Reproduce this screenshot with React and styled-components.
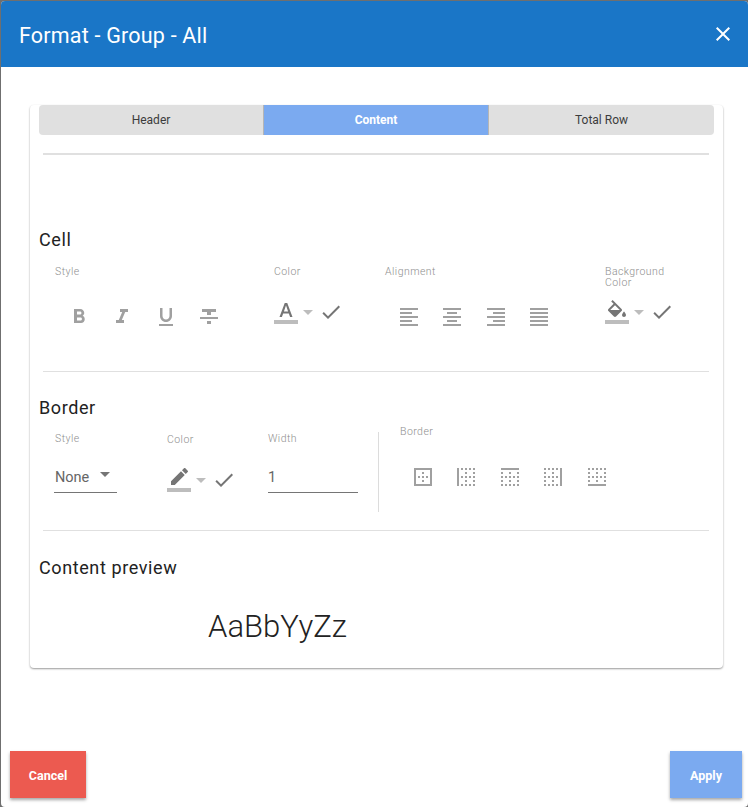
import React from "react";
import styled, { createGlobalStyle } from "styled-components";

const GlobalStyle = createGlobalStyle`
  html, body {
    margin: 0;
    padding: 0;
    height: 100%;
    background: #6f6f6f;
    overflow: hidden;
  }
  * {
    box-sizing: border-box;
  }
`;

const Dialog = styled.div`
  margin: 1px 0 0 1px;
  height: 806px;
  display: flex;
  flex-direction: column;
  background: #fff;
  border-radius: 4px;
  overflow: hidden;
  font-family: Roboto, "Liberation Sans", sans-serif;
`;

const Header = styled.div`
  height: 66px;
  flex-shrink: 0;
  display: flex;
  align-items: center;
  justify-content: space-between;
  padding: 0 13px 0 18px;
  background: #1a76c7;
  color: #fff;
`;

const Title = styled.div`
  padding-top: 2px;
  font-size: 21.5px;
  letter-spacing: 0.2px;
`;

const CloseIcon = styled.svg`
  width: 24px;
  height: 24px;
  fill: #fff;
`;

const Card = styled.div`
  margin: 38px 25px 0 29px;
  padding: 0 9px 21px;
  background: #fff;
  border-radius: 4px;
  box-shadow: 0 1px 2px rgba(0, 0, 0, 0.4);
`;

const Tabs = styled.div`
  display: grid;
  grid-template-columns: 224px 226px 225px;
  height: 30px;
  border-radius: 4px;
  overflow: hidden;
`;

const Tab = styled.div`
  display: flex;
  align-items: center;
  justify-content: center;
  font-size: 12px;
  background: ${(p) => (p.$active ? "#7baaf0" : "#e0e0e0")};
  color: ${(p) => (p.$active ? "#fff" : "#3c3c3c")};
  font-weight: ${(p) => (p.$active ? 700 : 400)};
  border-left: ${(p) => (p.$active ? "1px solid #b5b5b5" : "none")};
  border-right: ${(p) => (p.$active ? "1px solid #b5b5b5" : "none")};
`;

const Divider = styled.div`
  height: ${(p) => p.$h || 1}px;
  margin: ${(p) => p.$mt}px 5px 0 4px;
  background: #e0e0e0;
`;

const SectionTitle = styled.div`
  height: 24px;
  margin-top: ${(p) => p.$mt}px;
  padding-top: 1px;
  font-size: 18px;
  line-height: 24px;
  letter-spacing: 0.6px;
  color: #222;
`;

const CellRow = styled.div`
  display: grid;
  grid-template-columns: 219px 111px 220px auto;
  margin-top: 15px;
  padding-left: 16px;
`;

const BorderRow = styled.div`
  display: grid;
  grid-template-columns: 112px 101px 110px 1px auto;
  margin-top: 7px;
  padding-left: 16px;
`;

const Col = styled.div`
  padding-top: ${(p) => p.$top || 0}px;
`;

const Label = styled.div`
  height: ${(p) => p.$h}px;
  font-size: 10.5px;
  font-weight: 300;
  line-height: 11px;
  color: #8e8e8e;
  letter-spacing: 0.45px;
`;

const IconRow = styled.div`
  display: flex;
  padding-top: ${(p) => p.$top || 0}px;
  padding-left: ${(p) => p.$left || 0}px;
`;

const IconCell = styled.div`
  width: 43.5px;
  display: flex;
  justify-content: center;
`;

const Icon = styled.svg`
  width: 24px;
  height: 24px;
  flex-shrink: 0;
  fill: ${(p) => p.$color || "#a0a0a0"};
`;

const Picker = styled.div`
  display: flex;
  align-items: center;
  height: 24px;
`;

const Caret = styled.span`
  flex-shrink: 0;
  display: block;
  width: 0;
  height: 0;
  margin: ${(p) => (p.$dark ? "0" : "0 6px 0 5px")};
  border-left: 5px solid transparent;
  border-right: 5px solid transparent;
  border-top: 5px solid ${(p) => (p.$dark ? "#757575" : "#bdbdbd")};
`;

const Select = styled.div`
  width: 63px;
  height: 25px;
  margin-left: -1px;
  padding: 1px 0 0 1px;
  display: flex;
  gap: 11px;
  border-bottom: 1px solid #757575;
  font-size: 14.5px;
  line-height: 18px;
  color: #666;
`;

const SelectCaret = styled.div`
  padding-top: 3px;
`;

const WidthInput = styled.input`
  display: block;
  width: 90px;
  height: 25px;
  padding: 0 0 6px;
  border: none;
  border-bottom: 1px solid #757575;
  outline: none;
  background: transparent;
  font-family: inherit;
  font-size: 14.5px;
  color: #666;
`;

const VerticalLine = styled.div`
  width: 1px;
  height: 80px;
  margin-top: 6px;
  background: #dcdcdc;
`;

const BorderCol = styled.div`
  padding-left: 21px;
`;

const Preview = styled.div`
  margin: 28px 0 0 169px;
  font-size: 31px;
  font-weight: 300;
  line-height: 40px;
  color: #222;
`;

const Footer = styled.div`
  margin-top: auto;
  display: flex;
  justify-content: space-between;
  padding: 0 6px 9px 9px;
`;

const Button = styled.button`
  width: ${(p) => p.$w}px;
  height: 47px;
  padding: 2px 0 0;
  border: none;
  background: ${(p) => p.$bg};
  color: #fff;
  font-family: inherit;
  font-size: 12.5px;
  font-weight: 700;
  box-shadow: 0 2px 3px rgba(0, 0, 0, 0.35);
`;

const PATHS = {
  bold: "M15.6 10.79c.97-.67 1.65-1.77 1.65-2.79 0-2.26-1.75-4-4-4H7v14h7.04c2.09 0 3.71-1.7 3.71-3.79 0-1.52-.86-2.82-2.15-3.42zM10 6.5h3c.83 0 1.5.67 1.5 1.5s-.67 1.5-1.5 1.5h-3v-3zm3.5 9H10v-3h3.5c.83 0 1.5.67 1.5 1.5s-.67 1.5-1.5 1.5z",
  italic: "M10 4v3h2.21l-3.42 8H6v3h8v-3h-2.21l3.42-8H18V4z",
  underline: "M12 17c3.31 0 6-2.69 6-6V3h-2.5v8c0 1.93-1.57 3.5-3.5 3.5S8.5 12.93 8.5 11V3H6v8c0 3.31 2.69 6 6 6zm-7 2v2h14v-2H5z",
  strike: "M10 19h4v-3h-4v3zM5 4v3h5v3h4V7h5V4H5zM3 14h18v-2H3v2z",
  left: "M15 15H3v2h12v-2zm0-8H3v2h12V7zM3 13h18v-2H3v2zm0 8h18v-2H3v2zM3 3v2h18V3H3z",
  center: "M7 15v2h10v-2H7zm-4 6h18v-2H3v2zm0-8h18v-2H3v2zm4-6v2h10V7H7zM3 3v2h18V3H3z",
  right: "M3 21h18v-2H3v2zm6-4h12v-2H9v2zm-6-4h18v-2H3v2zm6-4h12V7H9v2zM3 3v2h18V3H3z",
  justify: "M3 21h18v-2H3v2zm0-4h18v-2H3v2zm0-4h18v-2H3v2zm0-4h18V7H3v2zm0-6v2h18V3H3z",
  borderOuter: "M13 7h-2v2h2V7zm0 4h-2v2h2v-2zm4 0h-2v2h2v-2zM3 3v18h18V3H3zm16 16H5V5h14v14zm-6-4h-2v2h2v-2zm-4-4H7v2h2v-2z",
  borderLeft: "M11 21h2v-2h-2v2zm0-4h2v-2h-2v2zm0-12h2V3h-2v2zm0 4h2V7h-2v2zm0 4h2v-2h-2v2zm-4 8h2v-2H7v2zM7 5h2V3H7v2zm0 8h2v-2H7v2zm-4 8h2V3H3v18zM19 9h2V7h-2v2zm-4 12h2v-2h-2v2zm4-4h2v-2h-2v2zm0-14v2h2V3h-2zm0 10h2v-2h-2v2zm0 8h2v-2h-2v2zm-4-8h2v-2h-2v2zm0-8h2V3h-2v2z",
  borderTop: "M7 21h2v-2H7v2zm0-8h2v-2H7v2zm4 0h2v-2h-2v2zm0 8h2v-2h-2v2zm-8-4h2v-2H3v2zm0 4h2v-2H3v2zm0-8h2v-2H3v2zm0-4h2V7H3v2zm8 8h2v-2h-2v2zm8-8h2V7h-2v2zm0 4h2v-2h-2v2zM3 3v2h18V3H3zm16 14h2v-2h-2v2zm-4 4h2v-2h-2v2zM11 9h2V7h-2v2zm8 12h2v-2h-2v2zm-4-8h2v-2h-2v2z",
  borderRight: "M7 21h2v-2H7v2zM3 5h2V3H3v2zm4 0h2V3H7v2zm0 8h2v-2H7v2zm-4 8h2v-2H3v2zm8 0h2v-2h-2v2zm-8-8h2v-2H3v2zm0 4h2v-2H3v2zm0-8h2V7H3v2zm8 8h2v-2h-2v2zm4-4h2v-2h-2v2zm4-10v18h2V3h-2zm-4 18h2v-2h-2v2zm0-16h2V3h-2v2zm-4 8h2v-2h-2v2zm0-8h2V3h-2v2zm0 4h2V7h-2v2z",
  borderBottom: "M9 11H7v2h2v-2zm4 4h-2v2h2v-2zM9 3H7v2h2V3zm4 8h-2v2h2v-2zM5 3H3v2h2V3zm8 4h-2v2h2V7zm4 4h-2v2h2v-2zm-4-8h-2v2h2V3zm4 0h-2v2h2V3zm2 10h2v-2h-2v2zm0 4h2v-2h-2v2zM5 7H3v2h2V7zm14-4v2h2V3h-2zm0 6h2V7h-2v2zM5 11H3v2h2v-2zM3 21h18v-2H3v2zm2-6H3v2h2v-2z",
  check: "M9 16.17 4.83 12l-1.41 1.41L9 19 21 7l-1.41-1.41z",
  close: "M19 6.41 17.59 5 12 10.59 6.41 5 5 6.41 10.59 12 5 17.59 6.41 19 12 13.41 17.59 19 19 17.59 13.41 12z",
  text: "M5.49 17h2.42l1.27-3.58h5.65L16.09 17h2.42L13.25 3h-2.5L5.49 17zm4.42-5.61 2.03-5.79h.12l2.03 5.79H9.91z",
  fill: "M16.56 8.94 7.62 0 6.21 1.41l2.38 2.38-5.15 5.15c-.59.59-.59 1.54 0 2.12l5.5 5.5c.29.29.68.44 1.06.44s.77-.15 1.06-.44l5.5-5.5c.59-.58.59-1.53 0-2.12zM5.21 10 10 5.21 14.79 10H5.21zM19 11.5s-2 2.17-2 3.5c0 1.1.9 2 2 2s2-.9 2-2c0-1.33-2-3.5-2-3.5z",
  pencil: "M17.75 7 14 3.25l-10 10V17h3.75l10-10zm2.96-2.96c.39-.39.39-1.02 0-1.41L18.37.29a.9959.9959 0 0 0-1.41 0L15 2.25 18.75 6l1.96-1.96z",
};

const MIcon = ({ name, color }) => (
  <Icon viewBox="0 0 24 24" $color={color}>
    <path d={PATHS[name]} />
  </Icon>
);

const Swatch = ({ name }) => (
  <Icon viewBox="0 0 24 24" $color="#757575">
    <path d={PATHS[name]} />
    <rect x="0" y="20" width="24" height="4" fill="#bdbdbd" />
  </Icon>
);

const ColorPicker = ({ name }) => (
  <Picker>
    <Swatch name={name} />
    <Caret />
    <MIcon name="check" color="#757575" />
  </Picker>
);

const IconGroup = ({ names, top, left }) => (
  <IconRow $top={top} $left={left}>
    {names.map((n) => (
      <IconCell key={n}>
        <MIcon name={n} />
      </IconCell>
    ))}
  </IconRow>
);

const App = () => {
  return (
    <>
      <GlobalStyle />
      <Dialog>
        <Header>
          <Title>Format - Group - All</Title>
          <CloseIcon viewBox="0 0 24 24">
            <path d={PATHS.close} />
          </CloseIcon>
        </Header>
        <Card>
          <Tabs>
            <Tab>Header</Tab>
            <Tab $active>Content</Tab>
            <Tab>Total Row</Tab>
          </Tabs>
          <Divider $mt={18} $h={2} />
          <SectionTitle $mt={72}>Cell</SectionTitle>
          <CellRow>
            <Col>
              <Label $h={34}>Style</Label>
              <IconGroup names={["bold", "italic", "underline", "strike"]} top={5} left={2} />
            </Col>
            <Col>
              <Label $h={34}>Color</Label>
              <ColorPicker name="text" />
            </Col>
            <Col>
              <Label $h={34}>Alignment</Label>
              <IconGroup names={["left", "center", "right", "justify"]} top={5} left={2} />
            </Col>
            <Col>
              <Label $h={34}>
                Background
                <br />
                Color
              </Label>
              <ColorPicker name="fill" />
            </Col>
          </CellRow>
          <Divider $mt={42} />
          <SectionTitle $mt={23}>Border</SectionTitle>
          <BorderRow>
            <Col $top={7}>
              <Label $h={35}>Style</Label>
              <Select>
                None
                <SelectCaret>
                  <Caret $dark />
                </SelectCaret>
              </Select>
            </Col>
            <Col $top={8}>
              <Label $h={34}>Color</Label>
              <ColorPicker name="pencil" />
            </Col>
            <Col $top={7}>
              <Label $h={35}>Width</Label>
              <WidthInput readOnly value="1" />
            </Col>
            <VerticalLine />
            <BorderCol>
              <Label $h={39}>Border</Label>
              <IconGroup
                names={["borderOuter", "borderLeft", "borderTop", "borderRight", "borderBottom"]}
                left={1}
              />
            </BorderCol>
          </BorderRow>
          <Divider $mt={18} />
          <SectionTitle $mt={24}>Content preview</SectionTitle>
          <Preview>AaBbYyZz</Preview>
        </Card>
        <Footer>
          <Button $w={76} $bg="#ec5a50">
            Cancel
          </Button>
          <Button $w={72} $bg="#7baaf0">
            Apply
          </Button>
        </Footer>
      </Dialog>
    </>
  );
};

export default App;
